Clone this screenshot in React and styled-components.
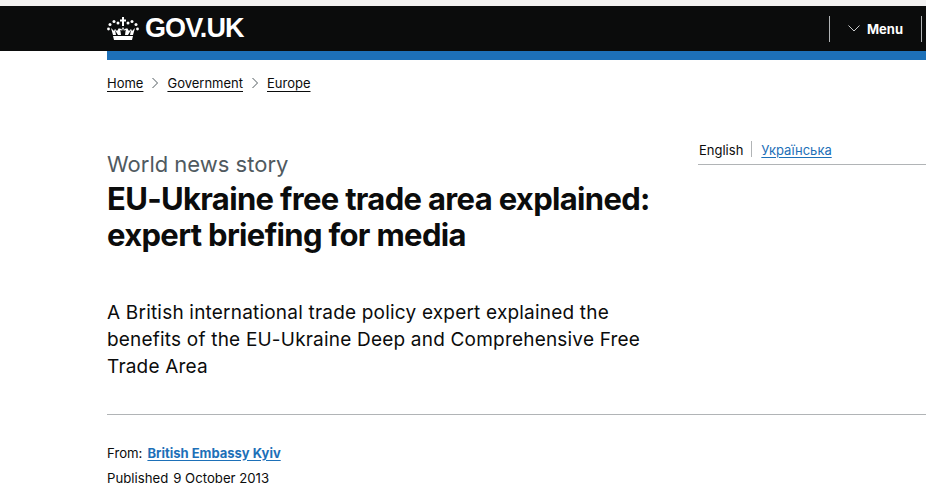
import React from 'react';
import styled, { createGlobalStyle } from 'styled-components';

const Global = createGlobalStyle`
  html, body { margin: 0; padding: 0; background: #fff; }
  body {
    font-family: Inter, "Liberation Sans", sans-serif;
    color: #0b0c0c;
    overflow: hidden;
  }
`;

const Page = styled.div`
  width: 926px;
  height: 498px;
  overflow: hidden;
  padding-top: 6px;
  background: #fff;
  box-shadow: inset 0 6px 0 #f3f2f1;
  box-sizing: border-box;
`;

const Header = styled.header`
  height: 45px;
  background: #0b0c0c;
  padding-left: 107px;
  display: flex;
  align-items: center;
  justify-content: space-between;
`;

const Logo = styled.a`
  display: flex;
  align-items: center;
  gap: 6px;
  color: #fff;
  font-family: "Liberation Sans", Arial, sans-serif;
  font-weight: 700;
  font-size: 27px;
  letter-spacing: -0.9px;
`;

const MenuWrap = styled.div`
  display: flex;
  align-items: center;
  height: 26px;
  margin-right: 4px;
  border-left: 1px solid #b1b4b6;
  border-right: 1px solid #b1b4b6;
  padding: 0 18px;
  gap: 7px;
  color: #fff;
  font-size: 13px;
  font-weight: 700;
`;

const BlueBar = styled.div`
  height: 9px;
  margin-left: 107px;
  background: #1d70b8;
`;

const Crumbs = styled.nav`
  display: flex;
  align-items: center;
  gap: 8px;
  padding: 14px 0 0 107px;
  height: 18px;
  font-size: 13px;
  line-height: 18px;
`;

const CrumbLink = styled.a`
  color: #0b0c0c;
  text-decoration: underline;
  text-underline-offset: 3px;
`;

const Hero = styled.div`
  display: flex;
  justify-content: space-between;
  padding: 0 0 0 107px;
  margin-top: 55px;
`;

const TitleBlock = styled.div`
  width: 560px;
`;

const Kicker = styled.div`
  font-size: 22px;
  line-height: 34px;
  color: #505a5f;
`;

const Title = styled.h1`
  margin: 0;
  font-size: 31px;
  line-height: 36px;
  font-weight: 700;
  letter-spacing: -0.67px;
`;

const Translations = styled.div`
  width: 228px;
  height: 27px;
  margin-top: -9px;
  box-sizing: border-box;
  display: flex;
  align-items: flex-start;
  border-bottom: 1px solid #b1b4b6;
  font-size: 13px;
  line-height: 18px;
  padding-top: 3px;
`;

const Current = styled.span`
  padding: 0 8px 0 1px;
  border-right: 1px solid #b1b4b6;
  height: 16px;
`;

const Translated = styled.a`
  margin-left: 9px;
  color: #1d70b8;
  text-decoration: underline;
  text-underline-offset: 2px;
`;

const Lead = styled.p`
  margin: 46px 0 0 107px;
  width: 540px;
  font-size: 19px;
  line-height: 27px;
  letter-spacing: 0.2px;
`;

const Rule = styled.hr`
  margin: 34px 0 0 107px;
  height: 1px;
  border: 0;
  background: #b1b4b6;
`;

const Meta = styled.dl`
  margin: 28px 0 0 107px;
  font-size: 13.2px;
  line-height: 20px;
`;

const MetaRow = styled.div`
  display: flex;
  gap: 5px;
  margin-bottom: 5px;
`;

const MetaTerm = styled.dt`
  margin: 0;
`;

const MetaValue = styled.dd`
  margin: 0;
`;

const OrgLink = styled.a`
  color: #1d70b8;
  font-size: 13px;
  font-weight: 700;
  text-decoration: underline;
  text-underline-offset: 2px;
`;

function Crown() {
  return (
    <svg width="32" height="24" viewBox="0 0 32 24" fill="#fff">
      <rect x="15" y="0" width="2" height="9" />
      <rect x="13" y="2.500" width="6" height="2" />
      <circle cx="1.500" cy="12" r="1.400" />
      <circle cx="3" cy="7.500" r="1.500" />
      <circle cx="7" cy="4.500" r="1.500" />
      <circle cx="11" cy="6" r="1.500" />
      <circle cx="21" cy="6" r="1.500" />
      <circle cx="25" cy="4.500" r="1.500" />
      <circle cx="29" cy="7.500" r="1.500" />
      <circle cx="30.500" cy="12" r="1.400" />
      <path d="M4 11l2 7h3l-1-5 3 5h3l-1-7 2 3 1-3 1 3 2-3-1 7h3l3-5-1 5h3l2-7-3 3-1-2-2 2-2-3-2 2-2-3-2 3-2-2-2 3-2-2-1 2z" />
      <path d="M6 19h20l-1 4H7z" />
    </svg>
  );
}

function Chevron() {
  return (
    <svg width="12" height="7" viewBox="0 0 12 7" fill="none" stroke="#c8cacb" strokeWidth="1">
      <path d="M.5.500L6 6l5.500-5.500" />
    </svg>
  );
}

function CrumbArrow() {
  return (
    <svg width="8" height="12" viewBox="0 0 8 12" fill="none" stroke="#505a5f" strokeWidth="1">
      <path d="M1.500 1l5 5-5 5" />
    </svg>
  );
}

export default function App() {
  return (
    <Page>
      <Global />
      <Header>
        <Logo>
          <Crown />
          GOV.UK
        </Logo>
        <MenuWrap>
          <Chevron />
          Menu
        </MenuWrap>
      </Header>
      <BlueBar />
      <Crumbs>
        <CrumbLink>Home</CrumbLink>
        <CrumbArrow />
        <CrumbLink>Government</CrumbLink>
        <CrumbArrow />
        <CrumbLink>Europe</CrumbLink>
      </Crumbs>
      <Hero>
        <TitleBlock>
          <Kicker>World news story</Kicker>
          <Title>EU-Ukraine free trade area explained: expert briefing for media</Title>
        </TitleBlock>
        <Translations>
          <Current>English</Current>
          <Translated>Українська</Translated>
        </Translations>
      </Hero>
      <Lead>
        A British international trade policy expert explained the benefits of the EU-Ukraine Deep and Comprehensive Free Trade Area
      </Lead>
      <Rule />
      <Meta>
        <MetaRow>
          <MetaTerm>From:</MetaTerm>
          <MetaValue><OrgLink>British Embassy Kyiv</OrgLink></MetaValue>
        </MetaRow>
        <MetaRow>
          <MetaTerm>Published</MetaTerm>
          <MetaValue>9 October 2013</MetaValue>
        </MetaRow>
      </Meta>
    </Page>
  );
}
